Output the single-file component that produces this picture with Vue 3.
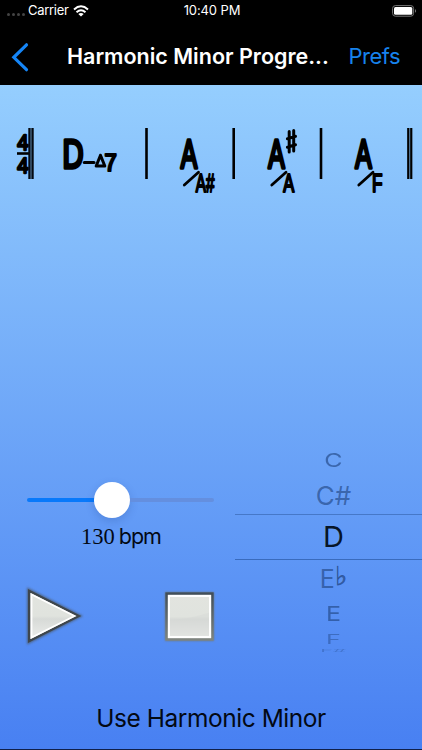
<script setup>
const measures = [
  { x: 179, bass: 'A#', bassX: 16.8, bassWidth: 18.5, sharp: false },
  { x: 266.5, bass: 'A', bassX: 16.8, bassWidth: 11, sharp: true },
  { x: 353.5, bass: 'F', bassX: 18.5, bassWidth: 10.5, sharp: false },
]
const bars = [146.5, 233.7, 321]
const keys = [
  { id: 'c', name: 'C' },
  { id: 'cs', name: 'C#' },
  { id: 'd', name: 'D' },
  { id: 'eb', name: 'E', flat: true },
  { id: 'e', name: 'E' },
  { id: 'f', name: 'F' },
  { id: 'fs', name: 'F#' },
]
</script>

<template>
  <div class="screen">
    <header>
      <div class="status">
        <div class="carrier">
          <span class="dots"><i v-for="n in 4" :key="n"></i></span>
          <span class="carrier-name">Carrier</span>
          <svg class="wifi" width="16" height="12" viewBox="0 0 16 12" fill="none" stroke="#fff" stroke-width="2">
            <path d="M1 4.4Q8-1.8 15 4.4M3.5 7.2Q8 3.4 12.5 7.2" />
            <path d="M8 11.6L5.3 8.9Q8 6.9 10.7 8.9Z" fill="#fff" stroke="none" />
          </svg>
        </div>
        <span class="time">10:40 PM</span>
        <svg class="battery" width="25" height="12" viewBox="0 0 25 12">
          <rect x=".6" y=".6" width="21" height="10.6" rx="2.8" fill="none" stroke="#777" stroke-width="1" />
          <rect x="2" y="2" width="18.3" height="7.8" rx="1.5" fill="#fff" />
          <path d="M23 4Q25.2 5.9 23 7.8Z" fill="#777" />
        </svg>
      </div>
      <nav>
        <svg class="back" width="18" height="30" viewBox="0 0 18 30" fill="none" stroke="#1585f6" stroke-width="3.2" stroke-linecap="round" stroke-linejoin="miter">
          <path d="M15.5 2.8L2.8 15.3L15.5 27.7" />
        </svg>
        <h1>Harmonic Minor Progre...</h1>
        <a class="prefs">Prefs</a>
      </nav>
    </header>

    <svg class="chart" width="422" height="120" viewBox="0 85 422 120">
      <g class="chord-text">
        <text class="meter" x="17.2" y="149.6" textLength="11.2" lengthAdjust="spacingAndGlyphs">4</text>
        <text class="meter" x="17.2" y="172.6" textLength="11.2" lengthAdjust="spacingAndGlyphs">4</text>
        <text class="root" x="62.5" y="168" textLength="21" lengthAdjust="spacingAndGlyphs">D</text>
        <text class="seven" x="104.4" y="171" textLength="12.3" lengthAdjust="spacingAndGlyphs">7</text>
      </g>
      <path d="M17 153.5H29" stroke="#000" stroke-width="2.6" />
      <path d="M29.5 128V179M32.5 128V179" stroke="#050a12" stroke-width="2.4" />
      <path d="M31 128V179" stroke="#39566e" stroke-width=".7" />
      <path d="M84.3 162.5H94" stroke="#000" stroke-width="3" stroke-linecap="round" />
      <path d="M100.5 155.2L96.2 166H104.8Z" fill="none" stroke="#000" stroke-width="3" stroke-linejoin="round" />
      <path v-for="bar in bars" :key="bar" :d="`M${bar} 128V179`" stroke="#000" stroke-width="2.6" />
      <path d="M408.3 128V179M411.2 128V179" stroke="#000" stroke-width="2.3" />
      <path d="M409.8 128V179" stroke="#507493" stroke-width=".7" />
      <g v-for="m in measures" :key="m.x" :transform="`translate(${m.x} 0)`">
        <g class="chord-text">
          <text class="root" x="1.8" y="168" textLength="16.4" lengthAdjust="spacingAndGlyphs">A</text>
          <text class="bass" :x="m.bassX" y="192" :textLength="m.bassWidth" lengthAdjust="spacingAndGlyphs">{{ m.bass }}</text>
        </g>
        <path d="M5.3 185L19.5 172.3" stroke="#000" stroke-width="2.8" stroke-linecap="round" />
        <path v-if="m.sharp" d="M22.7 131.5V152M27.2 130.5V151M20.9 138.8L29 136.4M20.9 147.2L29 144.8" stroke="#000" stroke-width="3" stroke-linecap="round" />
      </g>
    </svg>

    <main>
      <section class="controls">
        <div class="slider">
          <div class="filled"></div>
          <div class="thumb"></div>
          <div class="rest"></div>
        </div>
        <p class="tempo"><span class="number">130</span><span class="unit">bpm</span></p>
        <div class="transport">
          <svg width="60" height="62" viewBox="0 0 60 62">
            <defs>
              <linearGradient id="face" x1="0" y1="0" x2="0" y2="1">
                <stop offset="0" stop-color="#e2e4df" />
                <stop offset=".5" stop-color="#e0e3de" />
                <stop offset=".56" stop-color="#d7dad7" />
                <stop offset="1" stop-color="#eeefed" />
              </linearGradient>
              <filter id="halo" x="-20%" y="-20%" width="140%" height="140%"><feGaussianBlur stdDeviation="1.2" /></filter>
            </defs>
            <path d="M4 4V58L57 31Z" fill="#4b5660" stroke="#4b5660" stroke-width="2" filter="url(#halo)" opacity=".7" />
            <path d="M5.2 6V56L54.5 31Z" fill="url(#face)" stroke="#3e464d" stroke-width="2.5" />
            <path d="M7.5 9.5V52.5L50.5 31Z" fill="none" stroke="#fff" stroke-width="1.8" />
          </svg>
          <svg width="55" height="55" viewBox="0 0 54 54">
            <defs>
              <linearGradient id="edge" x1="0" y1="0" x2="0" y2="1">
                <stop offset="0" stop-color="#414e59" />
                <stop offset="1" stop-color="#7e847f" />
              </linearGradient>
            </defs>
            <rect x="3" y="3" width="48" height="48" fill="#687c8f" filter="url(#halo)" />
            <rect x="4.5" y="4.5" width="45" height="45" fill="url(#face)" stroke="url(#edge)" stroke-width="2.5" />
            <path d="M7 31Q28 29 47 23V47H7Z" fill="#d4d7d5" opacity=".4" />
            <rect x="6.8" y="6.8" width="40.4" height="40.4" fill="none" stroke="#fff" stroke-width="2" />
          </svg>
        </div>
      </section>
      <section class="picker">
        <div v-for="key in keys" :key="key.id" class="key" :class="key.id">
          <span>{{ key.name }}<b v-if="key.flat">♭</b></span>
        </div>
      </section>
    </main>

    <footer><span>Use Harmonic Minor</span></footer>
  </div>
</template>

<style>
body { margin: 0; overflow: hidden; }
</style>

<style scoped>
.screen {
  box-sizing: border-box;
  width: 422px;
  height: 750px;
  display: flex;
  flex-direction: column;
  overflow: hidden;
  border-bottom: 1px solid #10204a;
  background: linear-gradient(#95cefe 85px, #4880f2 749px);
  color: #030914;
  font-family: Inter, "Liberation Sans", sans-serif;
}
header { height: 85px; background: #000; color: #fff; flex: none; }
.status {
  display: grid;
  grid-template-columns: 1fr auto 1fr;
  align-items: center;
  height: 21px;
  padding: 0 5px 0 7px;
  font-size: 13px;
  line-height: 21px;
}
.carrier { display: flex; align-items: center; }
.dots { display: flex; gap: 2px; margin-top: 7px; }
.dots i { width: 3px; height: 3px; border-radius: 50%; background: #444; }
.carrier-name { width: 42px; margin-left: 3px; letter-spacing: -.3px; }
.wifi { margin-left: 3px; }
.time { letter-spacing: -.1px; }
.battery { justify-self: end; }
nav { display: flex; align-items: center; height: 64px; padding: 0 22px 0 11px; }
.back { margin-top: 7px; flex: none; }
h1 { margin: 6px 0 0 38px; width: 264px; font-size: 21.5px; font-weight: 600; line-height: 28px; white-space: nowrap; }
.prefs { margin: 6px 0 0 18px; font-size: 22px; letter-spacing: -.5px; line-height: 28px; color: #1783ed; }
.chart { flex: none; display: block; }
.chord-text { font-family: "Liberation Sans", sans-serif; font-weight: 400; fill: #000; stroke: #000; stroke-linejoin: round; }
.root { font-size: 40.5px; stroke-width: 3.6; }
.bass { font-size: 25px; stroke-width: 2.2; }
.meter { font-size: 22.5px; stroke-width: 2.3; }
.seven { font-size: 23px; stroke-width: 2.2; }
main { display: grid; grid-template-columns: 235px 187px; height: 214px; margin-top: 236px; flex: none; }
.controls { padding: 40px 21px 0 27px; }
.slider { display: flex; align-items: center; height: 38px; }
.filled { width: 67px; height: 4px; border-radius: 2px 0 0 2px; background: #0879fb; }
.thumb { width: 36px; height: 36px; border-radius: 50%; background: #fff; box-shadow: 0 3px 8px #1c398638; flex: none; }
.rest { flex: 1; height: 4px; border-radius: 0 2px 2px 0; background: #648fdf; }
.tempo { display: flex; align-items: baseline; gap: 6px; margin: 4px 0 0 54px; height: 27px; line-height: 27px; white-space: nowrap; }
.number { font-family: "Liberation Serif", serif; font-size: 22.5px; }
.unit { margin-left: -2px; font-size: 21.5px; letter-spacing: -1px; }
.transport { display: flex; justify-content: space-between; align-items: center; width: 192.5px; margin: 35px 0 0 -3px; }
.picker { display: flex; flex-direction: column; }
.key { box-sizing: border-box; display: flex; align-items: center; justify-content: center; padding-left: 10px; font-size: 25px; line-height: 30px; color: #1d417c9c; }
.key span { display: block; white-space: nowrap; flex: none; }
.key b { position: relative; top: -3px; left: 0; font-family: "DejaVu Sans", sans-serif; font-weight: 700; font-size: 26px; line-height: 20px; -webkit-text-stroke: .6px #1d417c9c; }
.c { height: 37px; }
.c span { transform: scaleY(.77); }
.cs { height: 36px; font-size: 26px; }
.d { height: 46px; border-top: 1px solid #4678c8; border-bottom: 1px solid #396bbd; font-size: 29px; color: #071528; }
.eb { height: 38px; }
.e { height: 32px; }
.e span { transform: scaleY(.8); }
.f { height: 18px; }
.f span { transform: scaleY(.5); opacity: .7; }
.fs { height: 6px; }
.fs span { transform: scale(.85, .13); opacity: .5; }
footer { flex: 1; display: flex; justify-content: center; align-items: center; padding-top: 31px; font-size: 24.5px; line-height: 32px; letter-spacing: -.45px; }
</style>
